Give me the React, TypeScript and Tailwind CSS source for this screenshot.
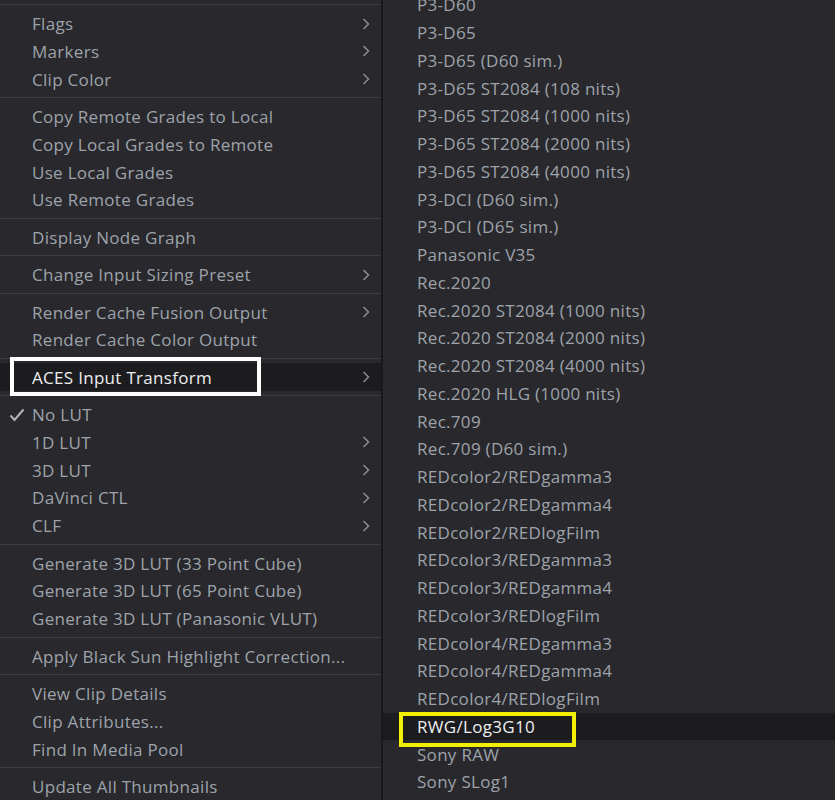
type Row = { label: string; sub?: boolean; checked?: boolean; active?: boolean };

const LEFT: Row[][] = [
  [
    { label: "Flags", sub: true },
    { label: "Markers", sub: true },
    { label: "Clip Color", sub: true },
  ],
  [
    { label: "Copy Remote Grades to Local" },
    { label: "Copy Local Grades to Remote" },
    { label: "Use Local Grades" },
    { label: "Use Remote Grades" },
  ],
  [{ label: "Display Node Graph" }],
  [{ label: "Change Input Sizing Preset", sub: true }],
  [
    { label: "Render Cache Fusion Output", sub: true },
    { label: "Render Cache Color Output" },
  ],
  [{ label: "ACES Input Transform", sub: true, active: true }],
  [
    { label: "No LUT", checked: true },
    { label: "1D LUT", sub: true },
    { label: "3D LUT", sub: true },
    { label: "DaVinci CTL", sub: true },
    { label: "CLF", sub: true },
  ],
  [
    { label: "Generate 3D LUT (33 Point Cube)" },
    { label: "Generate 3D LUT (65 Point Cube)" },
    { label: "Generate 3D LUT (Panasonic VLUT)" },
  ],
  [{ label: "Apply Black Sun Highlight Correction..." }],
  [
    { label: "View Clip Details" },
    { label: "Clip Attributes..." },
    { label: "Find In Media Pool" },
  ],
  [{ label: "Update All Thumbnails" }],
];

const RIGHT = [
  "P3-D60",
  "P3-D65",
  "P3-D65 (D60 sim.)",
  "P3-D65 ST2084 (108 nits)",
  "P3-D65 ST2084 (1000 nits)",
  "P3-D65 ST2084 (2000 nits)",
  "P3-D65 ST2084 (4000 nits)",
  "P3-DCI (D60 sim.)",
  "P3-DCI (D65 sim.)",
  "Panasonic V35",
  "Rec.2020",
  "Rec.2020 ST2084 (1000 nits)",
  "Rec.2020 ST2084 (2000 nits)",
  "Rec.2020 ST2084 (4000 nits)",
  "Rec.2020 HLG (1000 nits)",
  "Rec.709",
  "Rec.709 (D60 sim.)",
  "REDcolor2/REDgamma3",
  "REDcolor2/REDgamma4",
  "REDcolor2/REDlogFilm",
  "REDcolor3/REDgamma3",
  "REDcolor3/REDgamma4",
  "REDcolor3/REDlogFilm",
  "REDcolor4/REDgamma3",
  "REDcolor4/REDgamma4",
  "REDcolor4/REDlogFilm",
  "RWG/Log3G10",
  "Sony RAW",
  "Sony SLog1",
];

function Chevron() {
  return (
    <svg width="9" height="14" viewBox="0 0 9 14" className="shrink-0">
      <path d="M1.5 2 L6.5 7 L1.5 12" fill="none" stroke="#8b8d92" strokeWidth="1.5" />
    </svg>
  );
}

function Check() {
  return (
    <svg width="16" height="14" viewBox="0 0 16 14">
      <path d="M1.5 7.5 L5.5 12 L14.5 1.5" fill="none" stroke="#b4b6ba" strokeWidth="2" />
    </svg>
  );
}

function Separator() {
  return (
    <div className="h-[9.7px] flex items-center">
      <div className="h-px w-full bg-[#3d3d44]" />
    </div>
  );
}

function MenuRow({ row }: { row: Row }) {
  return (
    <div
      className={`relative h-[27.75px] flex items-center pr-[10px] ${
        row.active ? "bg-[#1c1c1f] text-[#eceef0]" : "text-[#9ea3aa]"
      }`}
    >
      <div className="w-[32px] shrink-0 flex justify-center pl-[1px]">
        {row.checked && <Check />}
      </div>
      <span className="flex-1 whitespace-nowrap">{row.label}</span>
      {row.sub && <Chevron />}
      {row.active && (
        <div className="absolute left-[10px] top-[-6px] w-[251px] h-[39px] border-4 border-white" />
      )}
    </div>
  );
}

export default function App() {
  return (
    <div
      className="w-[835px] h-[800px] overflow-hidden flex bg-[#28282d] text-[17px] tracking-[0.3px] leading-none"
      style={{ fontFamily: '"Open Sans", "Noto Sans", sans-serif' }}
    >
      {/* ── Context menu ───────────────────────────────────────────── */}
      <div className="w-[381px] shrink-0 bg-[#28282d]">
        <Separator />
        {LEFT.map((group, gi) => (
          <div key={gi}>
            {gi > 0 && <Separator />}
            {group.map((row) => (
              <MenuRow key={row.label} row={row} />
            ))}
          </div>
        ))}
      </div>

      <div className="w-[2px] shrink-0 bg-[#19191b]" />

      {/* ── ACES submenu ───────────────────────────────────────────── */}
      <div className="flex-1 mt-[-8.9px] bg-[#28282d]">
        {RIGHT.map((label) => {
          const active = label === "RWG/Log3G10";
          return (
            <div
              key={label}
              className={`relative h-[27.75px] flex items-center pl-[34px] whitespace-nowrap ${
                active ? "bg-[#1c1c1f] text-[#eceef0]" : "text-[#9ea3aa]"
              }`}
            >
              {label}
              {active && (
                <div className="absolute left-[16px] top-[-1px] w-[177px] h-[35px] border-4 border-[#f2f000]" />
              )}
            </div>
          );
        })}
      </div>
    </div>
  );
}
